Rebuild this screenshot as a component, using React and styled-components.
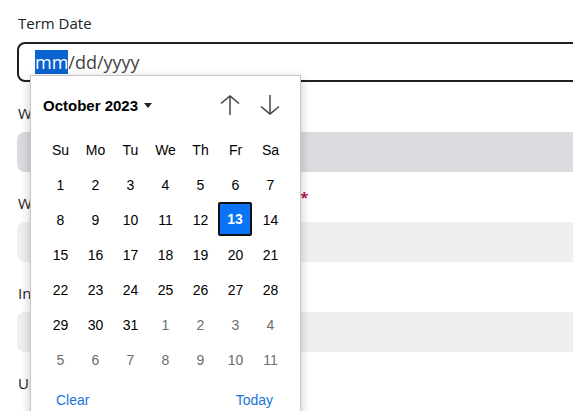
import React from 'react';
import styled, { createGlobalStyle } from 'styled-components';

const Global = createGlobalStyle`
  html, body {
    margin: 0;
    padding: 0;
    background: #ffffff;
    overflow: hidden;
  }
  body {
    font-family: "Open Sans", "Noto Sans", sans-serif;
  }
`;

const Page = styled.div`
  width: 640px;
  padding: 13px 0 0 17px;
  box-sizing: border-box;
`;

const Group = styled.div`
  position: relative;
  margin-bottom: 21px;
`;

const Label = styled.div`
  font-size: 15px;
  line-height: 20px;
  height: 20px;
  color: #222;
  margin-bottom: 9px;
  padding-left: 1px;
  white-space: nowrap;
`;

const Required = styled.span`
  color: #b3154a;
  font-size: 15px;
  font-weight: 700;
  line-height: 0;
  position: relative;
  top: -6px;
  margin-left: 8px;
`;

const DateInput = styled.div`
  height: 40px;
  box-sizing: border-box;
  border: 2px solid #1f1f1f;
  border-radius: 8px;
  padding-left: 16px;
  display: flex;
  align-items: center;
  font-size: 18px;
  color: #444;
`;

const Selected = styled.span`
  background: #0b63d0;
  color: #fff;
`;

const Field = styled.div`
  height: 40px;
  border-radius: 8px;
  background: ${p => (p.$dark ? '#dcdbe0' : '#efeff2')};
`;

const Popup = styled.div`
  position: absolute;
  top: 62px;
  left: 13px;
  width: 271px;
  box-sizing: border-box;
  background: #fff;
  border: 1px solid #c6c6c6;
  box-shadow: 0 3px 10px rgba(0, 0, 0, 0.22);
  padding: 14px 13px 0 12px;
  font-family: "Liberation Sans", Arial, sans-serif;
  z-index: 2;
`;

const Header = styled.div`
  display: flex;
  align-items: center;
  height: 30px;
`;

const Month = styled.div`
  font-size: 15px;
  font-weight: 700;
  color: #000;
  display: flex;
  align-items: center;
  gap: 6px;
  flex: 1;
`;

const Caret = styled.span`
  width: 0;
  height: 0;
  border-left: 4px solid transparent;
  border-right: 4px solid transparent;
  border-top: 5px solid #222;
`;

const NavButton = styled.div`
  width: 30px;
  height: 30px;
  display: flex;
  align-items: center;
  justify-content: center;
  margin-left: 10px;
  &:last-child {
    margin-right: 2px;
  }
`;

const Grid = styled.div`
  display: grid;
  grid-template-columns: repeat(7, 35px);
  grid-auto-rows: 35px;
  margin-top: 12px;
`;

const Cell = styled.div`
  display: flex;
  align-items: center;
  justify-content: center;
  font-size: 14px;
  color: ${p => (p.$muted ? '#6d6d6d' : '#000')};
  box-sizing: border-box;
  ${p =>
    p.$active &&
    `
    margin: 0 1px 1px 0;
    background: #0a74f5;
    color: #fff;
    font-weight: 700;
    border: 2px solid #111;
    border-radius: 2px;
  `}
`;

const Footer = styled.div`
  display: flex;
  justify-content: space-between;
  padding: 15px 14px 0 13px;
  height: 40px;
  box-sizing: border-box;
`;

const LinkButton = styled.span`
  color: #1a73d9;
  font-size: 14px;
`;

const Arrow = ({ up }) => (
  <svg width="22" height="22" viewBox="0 0 22 22" fill="none" stroke="#3a3a3a" strokeWidth="1.4">
    {up ? (
      <>
        <path d="M11 21V2" />
        <path d="M2 9.5l9-7.5 9 7.5" />
      </>
    ) : (
      <>
        <path d="M11 1v19" />
        <path d="M2 12.5l9 7.5 9-7.5" />
      </>
    )}
  </svg>
);

const days = ['Su', 'Mo', 'Tu', 'We', 'Th', 'Fr', 'Sa'];

const buildDates = () => {
  const cells = [];
  for (let d = 1; d <= 31; d++) cells.push({ d, muted: false });
  for (let d = 1; d <= 11; d++) cells.push({ d, muted: true });
  return cells;
};

const App = () => (
  <>
    <Global />
    <Page>
      <Group>
        <Label>Term Date</Label>
        <DateInput>
          <Selected>mm</Selected>/dd/yyyy
        </DateInput>
        <Popup>
          <Header>
            <Month>
              October 2023 <Caret />
            </Month>
            <NavButton><Arrow up /></NavButton>
            <NavButton><Arrow /></NavButton>
          </Header>
          <Grid>
            {days.map(d => (
              <Cell key={d}>{d}</Cell>
            ))}
            {buildDates().map((c, i) => (
              <Cell key={i} $muted={c.muted} $active={!c.muted && c.d === 13}>
                {c.d}
              </Cell>
            ))}
          </Grid>
          <Footer>
            <LinkButton>Clear</LinkButton>
            <LinkButton>Today</LinkButton>
          </Footer>
        </Popup>
      </Group>
      <Group>
        <Label>Work Location</Label>
        <Field $dark />
      </Group>
      <Group>
        <Label>Who was the employee's last manager?<Required>*</Required></Label>
        <Field />
      </Group>
      <Group>
        <Label>Internal Notes</Label>
        <Field />
      </Group>
      <Group>
        <Label>Uploaded Documents</Label>
      </Group>
    </Page>
  </>
);

export default App;
